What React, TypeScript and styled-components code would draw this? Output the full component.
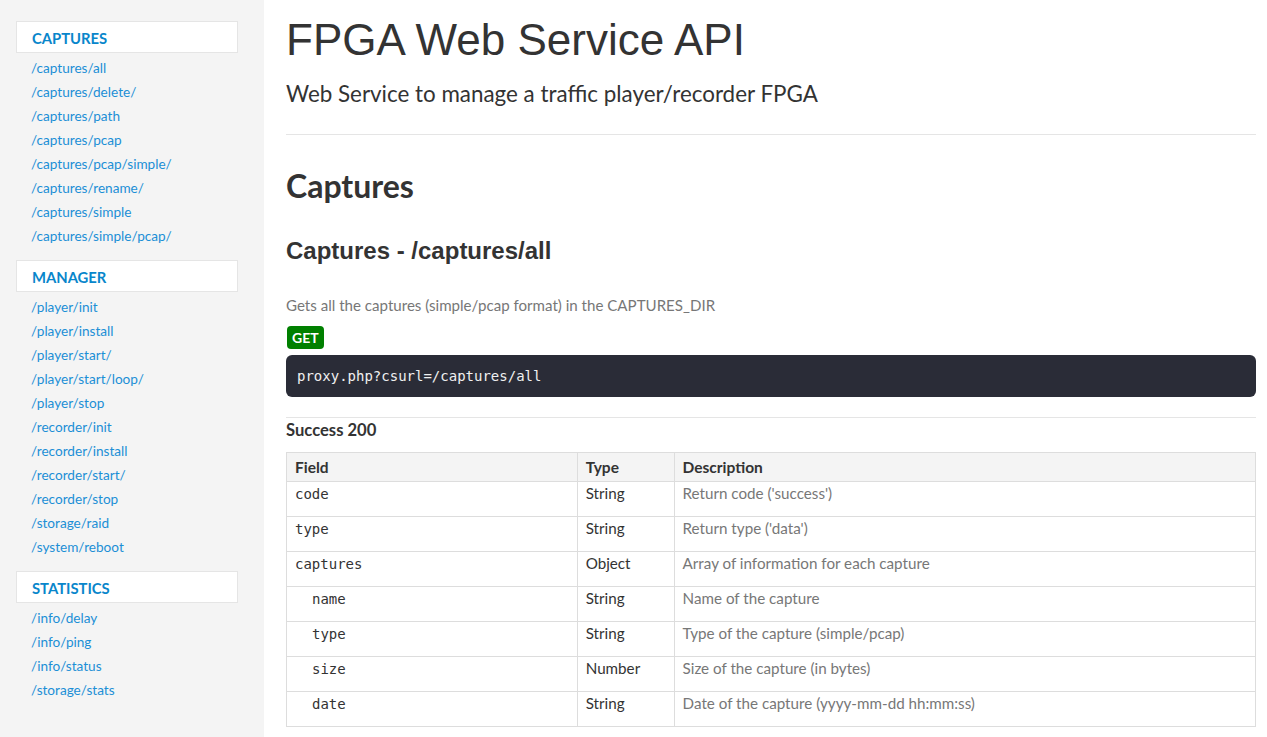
import React from "react";
import styled, { createGlobalStyle } from "styled-components";

const GlobalStyle = createGlobalStyle`
  html, body { margin: 0; padding: 0; background: #fff; }
  body { font-family: Lato, "Noto Sans", sans-serif; color: #333; }
  * { box-sizing: border-box; }
`;

const Page = styled.div`
  display: grid;
  grid-template-columns: 264px 1fr;
  min-height: 737px;
`;

const Sidebar = styled.nav`
  background: #f4f4f4;
  padding: 21px 26px 0 16px;
`;

const Group = styled.div`
  display: flex;
  flex-direction: column;
  margin-bottom: 12px;
`;

const NavHeader = styled.div`
  height: 32px;
  background: #fff;
  border: 1px solid #e5e5e5;
  padding: 1px 0 0 15px;
  display: flex;
  align-items: center;
  font-weight: 700;
  font-size: 14.8px;
  color: #0886cb;
  text-transform: uppercase;
  margin-bottom: 3px;
`;

const NavLink = styled.a`
  display: block;
  height: 24px;
  line-height: 24px;
  padding-left: 15px;
  font-size: 13.6px;
  color: #1c8fd6;
  text-decoration: none;
`;

const Main = styled.main`
  padding: 0 11px 0 22px;
`;

const Title = styled.h1`
  font-family: "Liberation Sans", Arial, sans-serif;
  font-weight: 400;
  font-size: 44px;
  line-height: 56px;
  margin: 12px 0 0;
  color: #333;
`;

const Subtitle = styled.p`
  font-size: 22.4px;
  line-height: 32px;
  margin: 10px 0 0;
  color: #333;
`;

const Rule = styled.hr<{ $top: number }>`
  border: 0;
  border-top: 1px solid #e5e5e5;
  margin: ${(p) => p.$top}px 0 0;
`;

const SectionTitle = styled.h2`
  font-size: 32px;
  font-weight: 700;
  line-height: 40px;
  margin: 31px 0 0;
  color: #333;
`;

const ArticleTitle = styled.h3`
  font-family: "Liberation Sans", Arial, sans-serif;
  font-size: 24px;
  font-weight: 700;
  line-height: 30px;
  margin: 30px 0 0;
  color: #333;
`;

const Description = styled.p`
  font-size: 15.1px;
  line-height: 22px;
  margin: 28px 0 0;
  color: #777;
`;

const Badge = styled.span`
  display: block;
  width: fit-content;
  margin: 10px 0 0 1px;
  height: 23px;
  line-height: 23px;
  padding: 0 5px;
  border-radius: 4px;
  background: #008000;
  color: #fff;
  font-weight: 700;
  font-size: 14px;
`;

const CodeBlock = styled.pre`
  margin: 6px 0 0;
  height: 42px;
  display: flex;
  align-items: center;
  padding: 0 11px;
  border-radius: 6px;
  background: #2a2c37;
  color: #f0f0f0;
  font-family: "DejaVu Sans Mono", monospace;
  font-size: 14px;
`;

const Label = styled.h4`
  font-size: 16.6px;
  font-weight: 700;
  margin: 0;
  line-height: 24px;
  color: #333;
`;

const Table = styled.table`
  width: 100%;
  margin-top: 10px;
  border-collapse: collapse;
  font-size: 15.2px;
`;

const Th = styled.th<{ $w?: string }>`
  width: ${(p) => p.$w || "auto"};
  text-align: left;
  background: #f4f4f4;
  border: 1px solid #ddd;
  height: 29px;
  padding: 0 8px;
  font-weight: 700;
  font-size: 15.5px;
  color: #333;
`;

const Td = styled.td<{ $muted?: boolean }>`
  border: 1px solid #ddd;
  height: 35px;
  padding: 2px 8px 0;
  vertical-align: top;
  line-height: 18px;
  color: ${(p) => (p.$muted ? "#777" : "#333")};
`;

const FieldCode = styled.code<{ $nested?: boolean }>`
  font-family: "DejaVu Sans Mono", monospace;
  font-size: 14px;
  padding-left: ${(p) => (p.$nested ? "17px" : "0")};
`;

const nav = [
  {
    title: "Captures",
    links: [
      "/captures/all",
      "/captures/delete/",
      "/captures/path",
      "/captures/pcap",
      "/captures/pcap/simple/",
      "/captures/rename/",
      "/captures/simple",
      "/captures/simple/pcap/",
    ],
  },
  {
    title: "Manager",
    links: [
      "/player/init",
      "/player/install",
      "/player/start/",
      "/player/start/loop/",
      "/player/stop",
      "/recorder/init",
      "/recorder/install",
      "/recorder/start/",
      "/recorder/stop",
      "/storage/raid",
      "/system/reboot",
    ],
  },
  {
    title: "Statistics",
    links: ["/info/delay", "/info/ping", "/info/status", "/storage/stats"],
  },
];

const rows = [
  { f: "code", t: "String", d: "Return code ('success')" },
  { f: "type", t: "String", d: "Return type ('data')" },
  { f: "captures", t: "Object", d: "Array of information for each capture" },
  { f: "name", t: "String", d: "Name of the capture", n: true },
  { f: "type", t: "String", d: "Type of the capture (simple/pcap)", n: true },
  { f: "size", t: "Number", d: "Size of the capture (in bytes)", n: true },
  { f: "date", t: "String", d: "Date of the capture (yyyy-mm-dd hh:mm:ss)", n: true },
];

export default function App() {
  return (
    <>
      <GlobalStyle />
      <Page>
        <Sidebar>
          {nav.map((g) => (
            <Group key={g.title}>
              <NavHeader>{g.title}</NavHeader>
              {g.links.map((l) => (
                <NavLink key={l} href="#">
                  {l}
                </NavLink>
              ))}
            </Group>
          ))}
        </Sidebar>
        <Main>
          <Title>FPGA Web Service API</Title>
          <Subtitle>Web Service to manage a traffic player/recorder FPGA</Subtitle>
          <Rule $top={24} />
          <SectionTitle>Captures</SectionTitle>
          <ArticleTitle>Captures - /captures/all</ArticleTitle>
          <Description>Gets all the captures (simple/pcap format) in the CAPTURES_DIR</Description>
          <Badge>GET</Badge>
          <CodeBlock>proxy.php?csurl=/captures/all</CodeBlock>
          <Rule $top={20} />
          <Label>Success 200</Label>
          <Table>
            <thead>
              <tr>
                <Th $w="30%">Field</Th>
                <Th $w="10%">Type</Th>
                <Th $w="60%">Description</Th>
              </tr>
            </thead>
            <tbody>
              {rows.map((r, i) => (
                <tr key={i}>
                  <Td>
                    <FieldCode $nested={r.n}>{r.f}</FieldCode>
                  </Td>
                  <Td>{r.t}</Td>
                  <Td $muted>{r.d}</Td>
                </tr>
              ))}
            </tbody>
          </Table>
        </Main>
      </Page>
    </>
  );
}
